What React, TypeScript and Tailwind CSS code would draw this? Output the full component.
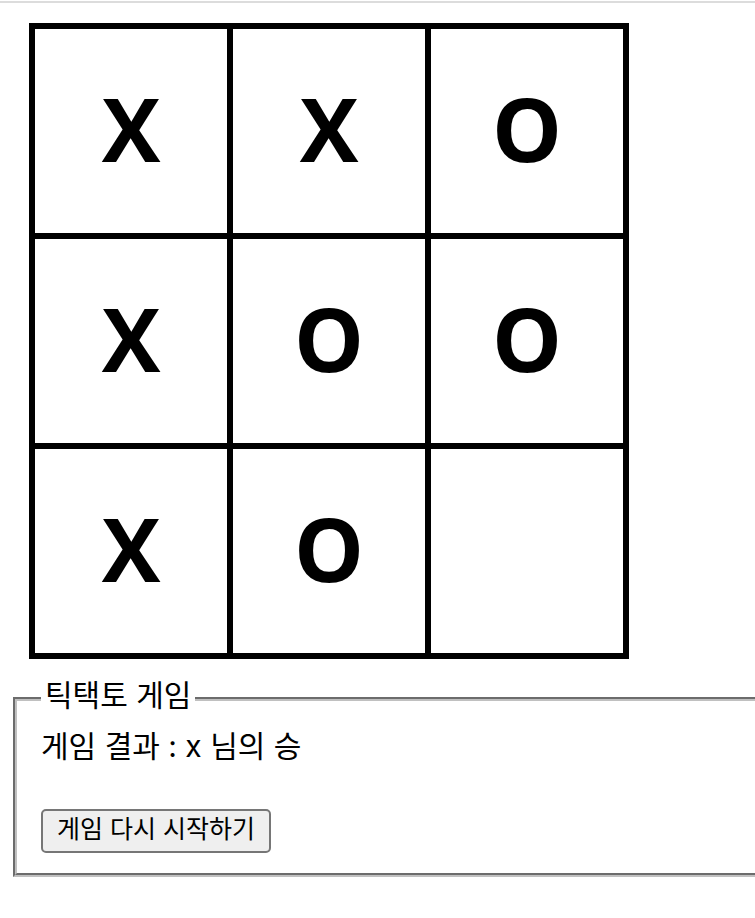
const board: string[][] = [
  ['X', 'X', 'O'],
  ['X', 'O', 'O'],
  ['X', 'O', ''],
];

export default function App() {
  return (
    <main className="overflow-x-hidden bg-white pt-px pb-10 font-['Inter','Noto_Sans_CJK_KR',sans-serif] text-black">
      <hr className="mb-5 border-t-2 border-[#dcdcdc]" />
      <table className="ml-[29px] border-collapse font-['Open_Sans',sans-serif]">
        <tbody>
          {board.map((row, r) => (
            <tr key={r}>
              {row.map((mark, c) => (
                <td
                  key={c}
                  className="h-[210px] w-[198px] border-6 border-black px-0 pt-0 pb-1.5 text-center align-middle text-[88px] leading-none font-bold"
                >
                  {mark}
                </td>
              ))}
            </tr>
          ))}
        </tbody>
      </table>
      <fieldset className="mt-4 -mr-4 ml-[13px] border-4 border-[#c0c0c0] [border-style:groove] px-6 pb-5">
        <legend className="px-1 pb-2 text-[30px] leading-10">틱택토 게임</legend>
        <p className="text-[30px] leading-[46px]">게임 결과 : x 님의 승</p>
        <button
          type="button"
          className="mt-10 h-11 rounded-[5px] border-2 border-[#767676] bg-[#efefef] px-3.5 pb-1 text-[25px] leading-8"
        >
          게임 다시 시작하기
        </button>
      </fieldset>
    </main>
  );
}
